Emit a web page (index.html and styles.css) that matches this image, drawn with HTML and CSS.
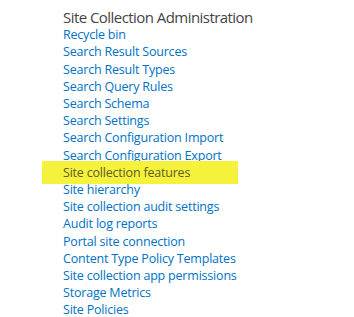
FILE: index.html
```html
<!DOCTYPE html>
<html lang="en">
<head>
    <meta charset="UTF-8">
    <title>Site Settings</title>
    <link rel="stylesheet" href="styles.css">
</head>
<body>

    <div class="section">
        <h3>Site Collection Administration</h3>
        <ul class="links">
            <li><a href="#">Recycle bin</a></li>
            <li><a href="#">Search Result Sources</a></li>
            <li><a href="#">Search Result Types</a></li>
            <li><a href="#">Search Query Rules</a></li>
            <li><a href="#">Search Schema</a></li>
            <li><a href="#">Search Settings</a></li>
            <li><a href="#">Search Configuration Import</a></li>
            <li><a href="#">Search Configuration Export</a></li>
            <li class="marked"><a href="#">Site collection features</a></li>
            <li><a href="#">Site hierarchy</a></li>
            <li><a href="#">Site collection audit settings</a></li>
            <li><a href="#">Audit log reports</a></li>
            <li><a href="#">Portal site connection</a></li>
            <li><a href="#">Content Type Policy Templates</a></li>
            <li><a href="#">Site collection app permissions</a></li>
            <li><a href="#">Storage Metrics</a></li>
            <li><a href="#">Site Policies</a></li>
        </ul>
    </div>

</body>
</html>
```
FILE: styles.css
```css
body {
    font-family: "Open Sans", "Noto Sans", sans-serif;
    background-color: #fff;
    margin: 0;
}
.section {
    padding: 7.5px 0 0 63px;
}
h3 {
    font-weight: normal;
    font-size: 15px;
    color: #444;
    margin: 0;
    line-height: 18.6px;
    letter-spacing: -0.55px;
}
.links {
    list-style: none;
    margin: 0;
    padding: 0;
}
.links li {
    font-size: 12.5px;
    line-height: 17.2px;
    letter-spacing: -0.2px;
}
.links a {
    color: #0072c6;
    text-decoration: none;
}
/* highlighter mark over one row */
.marked {
    position: relative;
    z-index: 0;
}
.marked::before {
    content: "";
    position: absolute;
    top: -3px;
    bottom: -3px;
    left: -21px;
    width: 196px;
    background-color: #f5f23c;
    z-index: -1;
}
.marked a {
    color: #5e5a24;
}
```
